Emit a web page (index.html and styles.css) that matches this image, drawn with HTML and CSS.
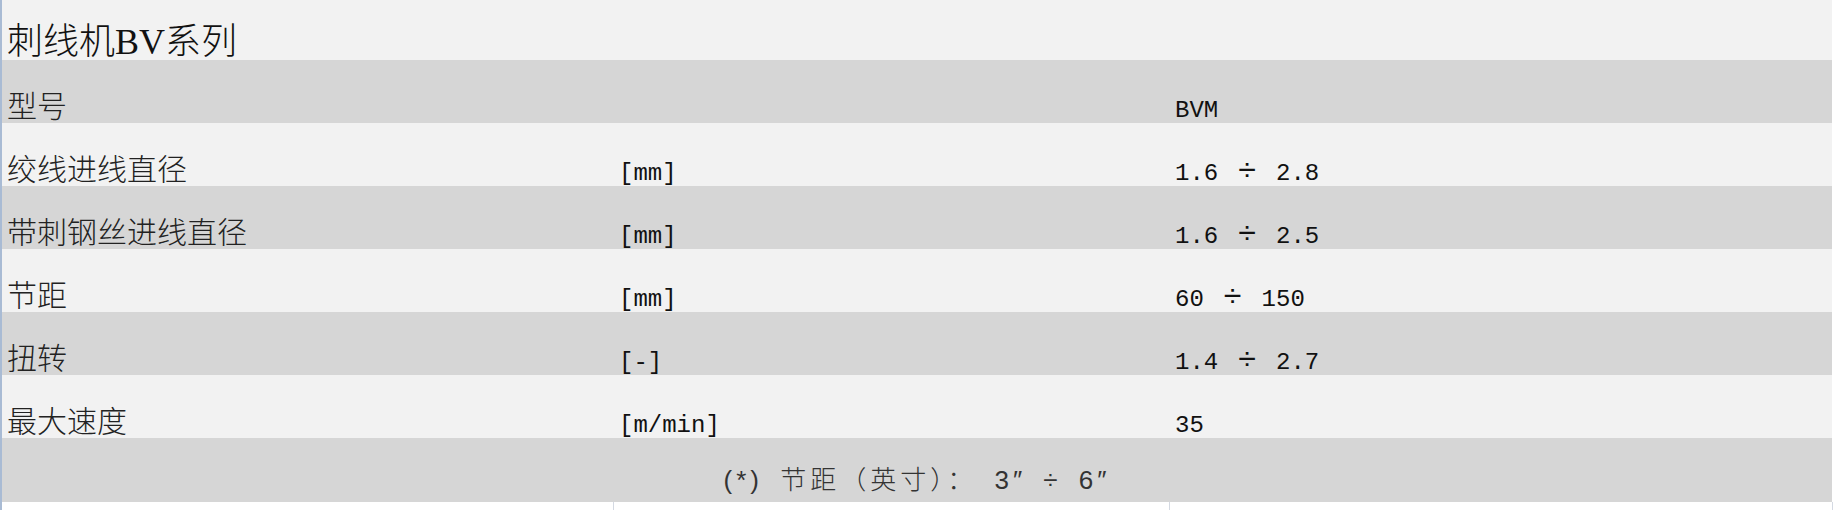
FILE: index.html
```html
<!DOCTYPE html>
<html lang="zh-CN">
<head>
    <meta charset="UTF-8">
    <meta name="viewport" content="width=device-width, initial-scale=1.0">
    <title>刺线机BV系列</title>
    <link rel="stylesheet" href="styles.css">
</head>
<body>
    <div class="sheet">
        <table class="spec">
            <colgroup>
                <col class="col-name">
                <col class="col-unit">
                <col class="col-value">
            </colgroup>

            <!-- Title -->
            <tr class="title">
                <td colspan="3">刺线机BV系列</td>
            </tr>

            <!-- Specs -->
            <tr class="dark">
                <td>型号</td>
                <td class="num"></td>
                <td class="num">BVM</td>
            </tr>
            <tr class="light">
                <td>绞线进线直径</td>
                <td class="num">[mm]</td>
                <td class="num">1.6 <span class="op">÷</span> 2.8</td>
            </tr>
            <tr class="dark">
                <td>带刺钢丝进线直径</td>
                <td class="num">[mm]</td>
                <td class="num">1.6 <span class="op">÷</span> 2.5</td>
            </tr>
            <tr class="light">
                <td>节距</td>
                <td class="num">[mm]</td>
                <td class="num">60 <span class="op">÷</span> 150</td>
            </tr>
            <tr class="dark">
                <td>扭转</td>
                <td class="num">[-]</td>
                <td class="num">1.4 <span class="op">÷</span> 2.7</td>
            </tr>
            <tr class="light">
                <td>最大速度</td>
                <td class="num">[m/min]</td>
                <td class="num">35</td>
            </tr>

            <!-- Footnote -->
            <tr class="dark note">
                <td colspan="3">(*) 节距（英寸）： 3″ ÷ 6″</td>
            </tr>

            <!-- Empty grid below the table -->
            <tr class="blank">
                <td></td>
                <td></td>
                <td></td>
            </tr>
        </table>
    </div>
</body>
</html>
```

FILE: styles.css
```css
body {
    margin: 0;
    background-color: #ffffff;
    font-family: "Liberation Serif", "Noto Sans CJK SC", serif;
    color: #222222;
}
.sheet {
    border-left: 2px solid #a9bbd4; /* selected-column edge */
    height: 510px;
    overflow: hidden;
}
.spec {
    width: 1830px;
    table-layout: fixed;
    border-collapse: collapse;
}
.col-name {
    width: 611px;
}
.col-unit {
    width: 556px;
}
.col-value {
    width: 663px;
}
.spec tr {
    height: 63px;
}
.spec td {
    padding: 0 0 1px 5px;
    vertical-align: bottom;
    font-size: 30px;
    font-weight: 300;
    line-height: 30px;
    white-space: nowrap;
}
.spec td.num {
    padding: 0 0 0 6px;
    font-family: "Liberation Mono", "Noto Sans CJK SC", monospace;
    font-size: 24px;
    font-weight: 400;
    line-height: 24px;
    color: #111111;
}
.op {
    display: inline-block;
    width: 29px;
    text-align: center;
    font-size: 32px;
    line-height: 24px;
}
.spec tr.title {
    height: 60px;
    background-color: #f2f2f2;
}
.title td {
    padding-bottom: 0;
    font-size: 36px;
    line-height: 36px;
    color: #111111;
}
.light {
    background-color: #f2f2f2;
}
.dark {
    background-color: #d6d6d6;
}
.spec tr.note {
    height: 64px;
}
.note td {
    padding: 0 0 9px 0;
    text-align: center;
    font-family: "Liberation Sans", "Noto Sans CJK SC", sans-serif;
    font-size: 26px;
    line-height: 26px;
    letter-spacing: 4px;
    word-spacing: 6px;
    color: #333333;
}
.spec tr.blank {
    height: 8px;
}
.blank td {
    padding: 0;
    background-color: #ffffff;
    border-right: 1px solid #d4d9e2;
}
```
